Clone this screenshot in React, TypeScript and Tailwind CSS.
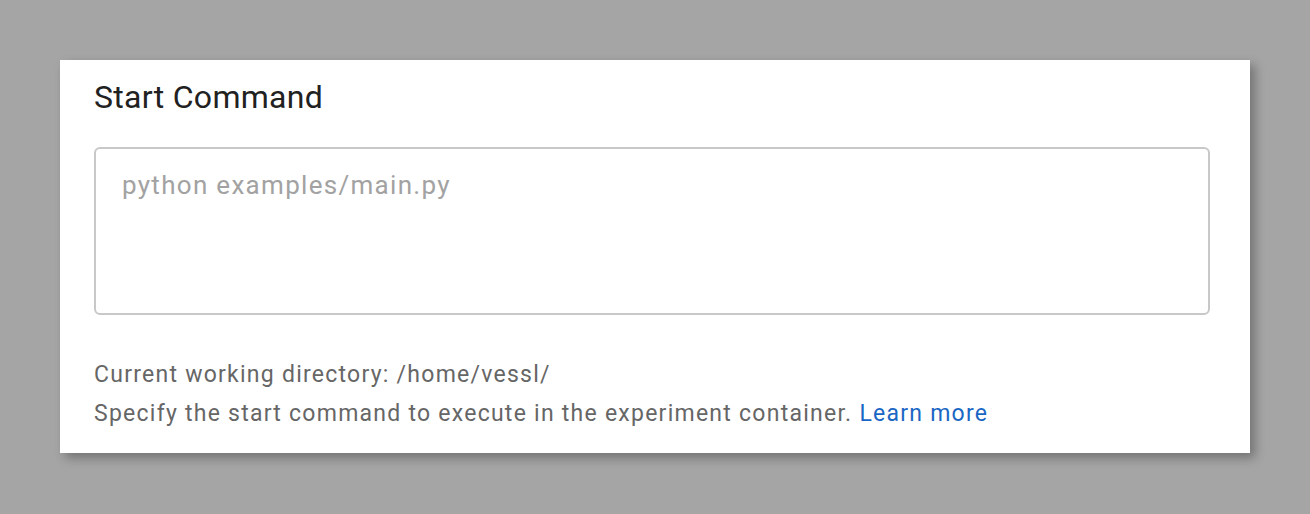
import React from "react";

export default function App() {
  return (
    <div className="w-[1310px] h-[514px] bg-[#a5a5a5] pt-[60px] pl-[60px]" style={{ fontFamily: "Roboto, 'Liberation Sans', sans-serif" }}>
      <div className="w-[1190px] h-[393px] bg-white shadow-[5px_5px_10px_rgba(0,0,0,0.3)] px-[34px] pt-[17px]">
        <h2 className="text-[32px] leading-[40px] text-[#212121] font-normal tracking-[0.3px]">Start Command</h2>
        <div className="mt-[30px] w-[1116px] h-[168px] border-2 border-[#c8c8c8] rounded-[6px] px-[26px] pt-[20px]">
          <div className="text-[26px] leading-[32px] text-[#a2a2a2] tracking-[1.3px]">python examples/main.py</div>
        </div>
        <div className="mt-[40px] text-[23px] leading-[39px] text-[#666666] tracking-[1.25px]">
          <div>Current working directory: /home/vessl/</div>
          <div>
            Specify the start command to execute in the experiment container.{" "}
            <a className="text-[#1a66c4]">Learn more</a>
          </div>
        </div>
      </div>
    </div>
  );
}
